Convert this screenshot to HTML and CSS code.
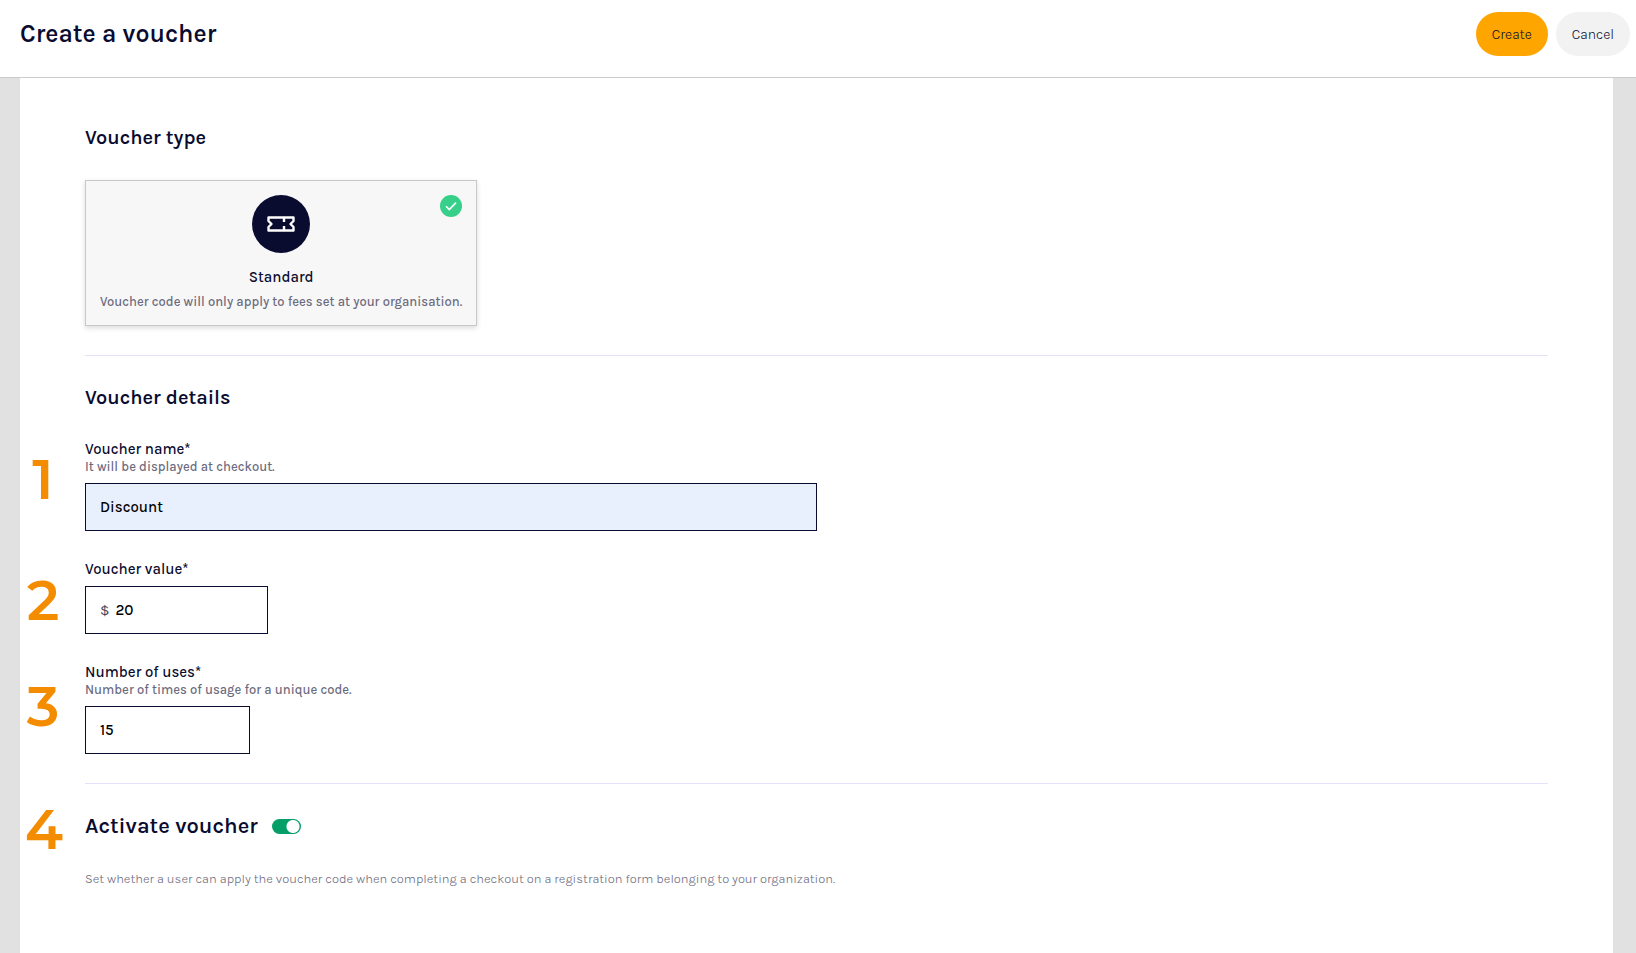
FILE: index.html
```html
<!DOCTYPE html>
<html lang="en">
<head>
    <meta charset="UTF-8">
    <meta name="viewport" content="width=device-width, initial-scale=1.0">
    <title>Create a voucher</title>
    <link rel="stylesheet" href="styles.css">
</head>
<body>
    <header class="header">
        <h1>Create a voucher</h1>
        <div class="actions">
            <button type="submit" form="voucher-form" class="btn btn-primary">Create</button>
            <button type="button" class="btn">Cancel</button>
        </div>
    </header>

    <main class="panel">
        <form id="voucher-form">
            <section class="section">
                <h2>Voucher type</h2>
                <label class="type-card">
                    <input type="radio" name="type" value="standard" class="type-radio" checked>
                    <svg class="type-check" viewBox="0 0 22 22" aria-hidden="true">
                        <circle cx="11" cy="11" r="11" fill="#36d08a"/>
                        <path d="M6 11.3l3.3 3.3 6.7-7" fill="none" stroke="#fff" stroke-width="1.6"/>
                    </svg>
                    <svg class="type-icon" viewBox="0 0 58 58" aria-hidden="true">
                        <circle cx="29" cy="29" r="29" fill="#090b2f"/>
                        <path d="M16.5 22.5h25v3.5l-3 3 3 3v3.5h-25v-3.5l3-3-3-3z" fill="none" stroke="#fff" stroke-width="2.4" stroke-linejoin="round"/>
                        <path d="M32 22v5M32 31v5" fill="none" stroke="#fff" stroke-width="2.4"/>
                    </svg>
                    <span class="type-name">Standard</span>
                    <span class="type-text">Voucher code will only apply to fees set at your organisation.</span>
                </label>
            </section>

            <section class="section">
                <h2>Voucher details</h2>
                <div class="field">
                    <span class="step step-name">1</span>
                    <label for="name">Voucher name*</label>
                    <small id="name-help">It will be displayed at checkout.</small>
                    <input type="text" id="name" class="input input-filled" value="Discount" aria-describedby="name-help">
                </div>
                <div class="field">
                    <span class="step step-value">2</span>
                    <label for="value">Voucher value*</label>
                    <div class="input money">
                        <span>$</span>
                        <input type="text" id="value" value="20">
                    </div>
                </div>
                <div class="field">
                    <span class="step step-uses">3</span>
                    <label for="uses">Number of uses*</label>
                    <small id="uses-help">Number of times of usage for a unique code.</small>
                    <input type="text" id="uses" class="input input-short" value="15" aria-describedby="uses-help">
                </div>
            </section>

            <section class="section">
                <div class="activate">
                    <span class="step step-activate">4</span>
                    <h2><label for="active">Activate voucher</label></h2>
                    <input type="checkbox" id="active" class="toggle" checked>
                </div>
                <p class="note">Set whether a user can apply the voucher code when completing a checkout on a registration form belonging to your organization.</p>
            </section>
        </form>
    </main>
</body>
</html>
```

FILE: styles.css
```css
* { box-sizing: border-box; }

body {
    display: flex;
    flex-direction: column;
    min-height: 100vh;
    margin: 0;
    background-color: #e1e1e1;
    color: #090b2f;
    font-family: Karla, Inter, "Liberation Sans", sans-serif;
    font-size: 15px;
    line-height: 18px;
}

h1, h2, p { margin: 0; }

h1 {
    font-size: 25px;
    line-height: 32px;
    font-weight: 600;
}

h2 {
    font-size: 20px;
    line-height: 24px;
    font-weight: 600;
}

/* Header */
.header {
    display: flex;
    justify-content: space-between;
    align-items: flex-start;
    padding: 12px 6px 21px 20px;
    background-color: white;
    border-bottom: 1px solid #ccc;
}

.header h1 { padding-top: 6px; }

.actions {
    display: flex;
    gap: 8px;
}

.btn {
    height: 44px;
    padding: 0 16px;
    border: none;
    border-radius: 22px;
    background-color: #f2f2f2;
    color: #090b2f;
    font-family: inherit;
    font-size: 14px;
    font-weight: 300;
    cursor: pointer;
}

.btn-primary { background-color: #ffa500; }

/* Panel */
.panel {
    flex: 1;
    margin: 0 23px 0 20px;
    padding: 48px 65px;
    background-color: white;
}

.section + .section {
    margin-top: 29px;
    padding-top: 30px;
    border-top: 1px solid #e4e1fb;
}

/* Voucher type */
.type-card {
    position: relative;
    display: flex;
    flex-direction: column;
    align-items: center;
    width: fit-content;
    margin-top: 30px;
    padding: 14px;
    border: 1px solid #c8c8c8;
    background-color: #f7f7f7;
    box-shadow: 0 2px 5px rgba(0, 0, 0, 0.15);
    cursor: pointer;
}

.type-radio {
    position: absolute;
    opacity: 0;
}

.type-check {
    position: absolute;
    top: 14px;
    right: 14px;
    width: 22px;
    height: 22px;
}

.type-icon {
    width: 58px;
    height: 58px;
}

.type-name {
    margin-top: 15px;
    font-weight: 500;
}

.type-text {
    margin-top: 7px;
    color: #6b6a7d;
    font-size: 13px;
    font-weight: 500;
}

/* Fields */
.field {
    position: relative;
    display: flex;
    flex-direction: column;
    align-items: flex-start;
    margin-top: 29px;
}

h2 + .field { margin-top: 30px; }

.field label { font-weight: 500; }

.field small {
    color: #6b6a7d;
    font-size: 13px;
    font-weight: 500;
}

.input {
    width: 50%;
    height: 48px;
    margin-top: 7px;
    padding: 0 14px;
    border: 1px solid #090b2f;
    border-radius: 0;
    background-color: white;
    color: black;
    font-family: inherit;
    font-size: 15px;
    font-weight: 500;
}

.input-filled { background-color: #e8f0fe; }

.input-short { width: 165px; }

.money {
    display: flex;
    align-items: center;
    gap: 6px;
    width: 183px;
    margin-top: 8px;
}

.money span {
    color: #45465c;
    font-weight: 400;
}

.money input {
    width: 100%;
    padding: 0;
    border: none;
    outline: none;
    font: inherit;
}

/* Step numbers in the left margin */
.step {
    position: absolute;
    left: -60px;
    width: 36px;
    color: #f48c00;
    font-family: Montserrat, Lato, sans-serif;
    font-size: 56px;
    line-height: 56px;
    font-weight: 600;
    text-align: center;
}

.step-name { top: 11px; }
.step-value { top: 12px; }
.step-uses { top: 15px; }
.step-activate { top: -13px; }

/* Activate */
.activate {
    position: relative;
    display: flex;
    align-items: center;
    gap: 14px;
}

.activate h2 { font-size: 22px; }

.toggle {
    appearance: none;
    width: 29px;
    height: 15px;
    margin: 0;
    border-radius: 8px;
    background: radial-gradient(circle at 21px 50%, white 6px, transparent 7px) #b5b5b5;
    cursor: pointer;
}

.toggle:checked { background-color: #049f68; }

.note {
    margin-top: 32px;
    color: #6b6a7d;
    font-size: 13px;
    font-weight: 300;
}
```
